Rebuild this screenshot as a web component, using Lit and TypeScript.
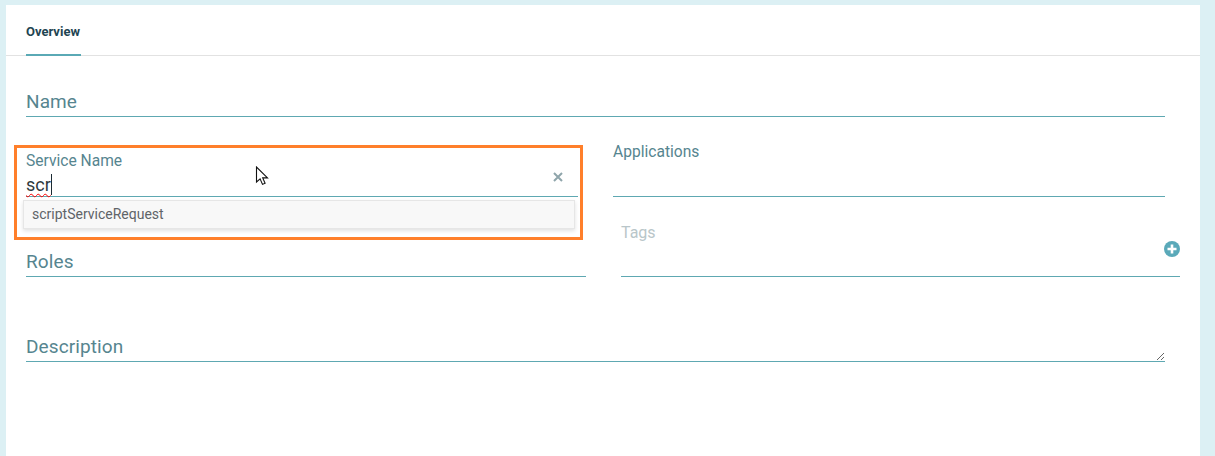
import { LitElement, html, css } from "lit";
import { customElement } from "lit/decorators.js";

@customElement("app-root")
export class AppRoot extends LitElement {
  static styles = css`
    :host { display: block; height: 456px; overflow: hidden; background: #dcf0f4; font-family: Roboto, "Liberation Sans", sans-serif; padding: 5px 15px 0 6px; box-sizing: border-box; }
    .card { position: relative; background: #fff; height: 451px; }
    .tabs { height: 50px; border-bottom: 1px solid #e2e2e2; padding-left: 20px; display: flex; }
    .tab { font-size: 13px; font-weight: 700; color: #1f4552; width: 55px; white-space: nowrap; height: 51px; box-sizing: border-box; line-height: 53px; border-bottom: 2px solid #5aa9b5; }
    .form { padding-left: 20px; }
    .row { display: flex; }
    .field { position: relative; box-sizing: border-box; border-bottom: 1px solid #5ea8b2; color: #56858f; }
    .big { font-size: 19px; letter-spacing: 0.1px; line-height: 22px; }
    .name { width: 1139px; height: 31px; margin-top: 30px; padding-top: 5px; }
    .r1 { margin-top: 23px; gap: 35px; }
    .service, .apps { width: 552px; height: 57px; }
    .small { font-size: 15.6px; line-height: 18px; }
    .service .small { padding-top: 12px; }
    .apps .small { padding-top: 3px; }
    .value { font-size: 18px; line-height: 22px; color: #2f3a40; margin-top: 4px; display: inline-block; }
    .typed { text-decoration: underline wavy #ff0000 1px; text-underline-offset: 2px; border-right: 1px solid #1c2b33; }
    .clear { position: absolute; right: 14px; top: 31px; width: 12px; height: 12px; }
    .menu { position: absolute; left: -3px; top: 60px; width: 552px; height: 29px; box-sizing: border-box; background: #f8f8f8; border: 1px solid #e6e6e6; box-shadow: 0 2px 4px rgba(0,0,0,.12); font-size: 14px; line-height: 27px; padding-left: 8px; color: #5f6468; z-index: 2; }
    .r2 { margin-top: 25px; gap: 35px; }
    .roles { width: 560px; height: 55px; padding-top: 29px; }
    .tags { width: 559px; height: 55px; color: #b9c6c9; font-size: 16px; line-height: 20px; padding-top: 1px; }
    .plus { position: absolute; right: 0; top: 19px; width: 16px; height: 16px; }
    .desc { display: block; width: 1139px; height: 32px; margin-top: 53px; box-sizing: border-box; padding: 6px 0 0; border: 0; border-bottom: 1px solid #5ea8b2; outline: 0; resize: vertical; background: transparent; font: inherit; font-size: 19px; letter-spacing: 0.1px; line-height: 22px; }
    .desc::placeholder { color: #56858f; opacity: 1; }
    .highlight { position: absolute; left: 8px; top: 140px; width: 569px; height: 95px; box-sizing: border-box; border: 3px solid #ff7f2a; z-index: 3; pointer-events: none; }
    .cursor { position: absolute; left: 249px; top: 161px; width: 14px; height: 21px; z-index: 4; }
  `;
  render() {
    return html`<div class="card">
      <div class="tabs"><div class="tab">Overview</div></div>
      <div class="form">
        <div class="field big name">Name</div>
        <div class="row r1">
          <div class="field service">
            <div class="small">Service Name</div>
            <div class="value"><span class="typed">scr</span></div>
            <svg class="clear" viewBox="0 0 12 12"><path d="M2 2l8 8M10 2l-8 8" stroke="#8fa5ab" stroke-width="2" fill="none"/></svg>
            <div class="menu">scriptServiceRequest</div>
          </div>
          <div class="field apps"><div class="small">Applications</div></div>
        </div>
        <div class="row r2">
          <div class="field big roles">Roles</div>
          <div class="field tags">Tags
            <svg class="plus" viewBox="0 0 16 16"><circle cx="8" cy="8" r="8" fill="#5aa9b9"/><path d="M8 3.5v9M3.5 8h9" stroke="#fff" stroke-width="2.6"/></svg>
          </div>
        </div>
        <textarea class="desc" placeholder="Description"></textarea>
      </div>
      <div class="highlight"></div>
      <svg class="cursor" viewBox="0 0 14 21"><path d="M1.5 1v15l3.6-3.2 2.4 5.6 2.6-1.1-2.4-5.4h4.8z" fill="#fff" stroke="#111" stroke-width="1.1" stroke-linejoin="miter"/></svg>
    </div>`;
  }
}
